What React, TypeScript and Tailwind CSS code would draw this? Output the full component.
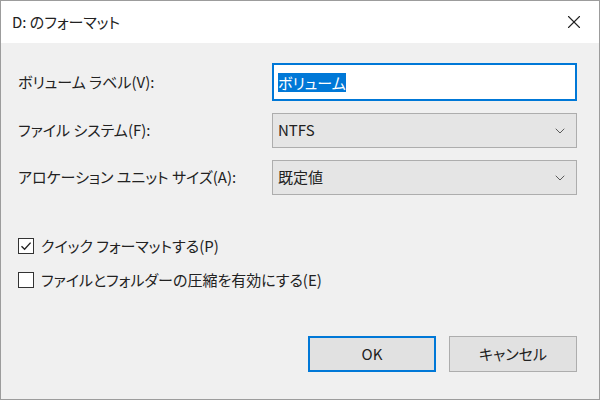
import { X, ChevronDown } from 'lucide-react';

const font = "font-['Noto_Sans_CJK_JP',sans-serif] [font-feature-settings:'palt']";

function Select({ value }: { value: string }) {
    return (
        <div className="h-[35px] bg-[#e5e5e5] border border-[#adadad] flex items-center justify-between pl-[5px] pr-[8px]">
            <span>{value}</span>
            <ChevronDown size={16} strokeWidth={1.3} className="text-[#444]" />
        </div>
    );
}

function Checkbox({ checked, label }: { checked: boolean; label: string }) {
    return (
        <div className="flex items-center gap-[7px] h-[20px]">
            <div className="w-[16px] h-[16px] bg-white border border-[#333] flex items-center justify-center">
                {checked && (
                    <svg width="12" height="12" viewBox="0 0 12 12" fill="none">
                        <path d="M1.5 6.2 L4.6 9.2 L10.6 2.6" stroke="#222" strokeWidth="1.4" />
                    </svg>
                )}
            </div>
            <span>{label}</span>
        </div>
    );
}

export default function App() {
    return (
        <div className={`w-[600px] h-[400px] border border-[#9c9c9c] flex flex-col bg-[#f0f0f0] text-[15px] text-[#222] ${font}`}>
            {/* Title bar */}
            <div className="h-[42px] bg-white flex items-center justify-between pl-[11px] pr-[14px] shrink-0">
                <span>D: のフォーマット</span>
                <X size={22} strokeWidth={1.2} className="text-[#222]" />
            </div>

            {/* Body */}
            <div className="flex-1 flex flex-col pl-[17px] pr-[22px] pt-[20px]">
                <div className="grid grid-cols-[254px_1fr] items-center gap-y-[12px]">
                    <span>ボリューム ラベル(V):</span>
                    <div className="h-[38px] bg-white border-2 border-[#0078d7] flex items-center px-[4px]">
                        <span className="bg-[#0078d7] text-white leading-[19px]">ボリューム</span>
                    </div>
                    <span>ファイル システム(F):</span>
                    <Select value="NTFS" />
                    <span>アロケーション ユニット サイズ(A):</span>
                    <Select value="既定値" />
                </div>

                <div className="flex flex-col gap-[14px] mt-[41px]">
                    <Checkbox checked label="クイック フォーマットする(P)" />
                    <Checkbox checked={false} label="ファイルとフォルダーの圧縮を有効にする(E)" />
                </div>

                <div className="flex justify-end gap-[13px] mt-[46px]">
                    <button className="w-[128px] h-[36px] bg-[#e1e1e1] border-2 border-[#0078d7]">OK</button>
                    <button className="w-[128px] h-[36px] bg-[#e1e1e1] border border-[#adadad]">キャンセル</button>
                </div>
            </div>
        </div>
    );
}
